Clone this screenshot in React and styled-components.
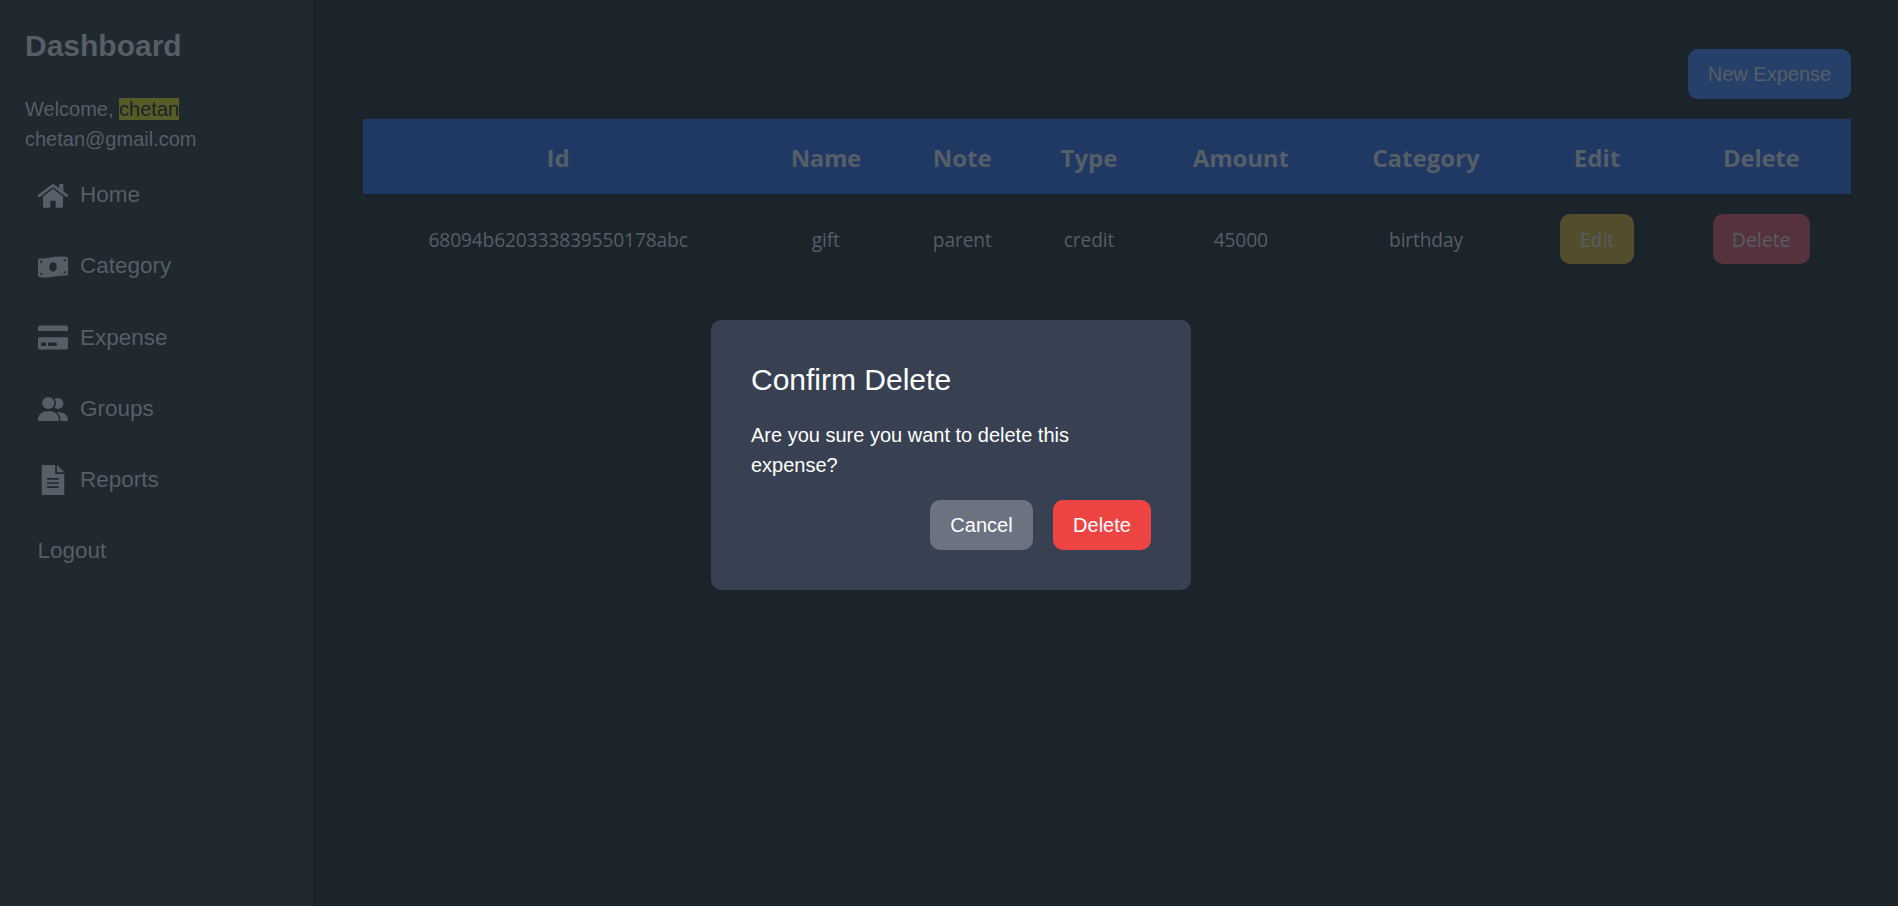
import React from "react";
import styled, { createGlobalStyle } from "styled-components";

const GlobalStyle = createGlobalStyle`
  *, *::before, *::after { box-sizing: border-box; }
  body {
    margin: 0;
    overflow: hidden;
    background: #1b232b;
    color: #565e67;
    font: 20px/30px "Liberation Sans", Arial, sans-serif;
  }
  h1, h2, p, ul { margin: 0; padding: 0; }
`;

const Page = styled.div`
  display: flex;
  height: 100vh;
`;

const Sidebar = styled.aside`
  flex: 0 0 313px;
  padding: 25px;
  background: #202830;
`;

const Brand = styled.h1`
  margin-bottom: 27px;
  font-size: 30px;
  line-height: 42px;
  font-weight: 700;
`;

const Mark = styled.mark`
  background: #555c26;
  color: #1b232b;
`;

const NavList = styled.ul`
  display: flex;
  flex-direction: column;
  gap: 40px;
  margin-top: 25px;
  padding-left: 12.5px;
  list-style: none;
`;

const NavItem = styled.li`
  display: flex;
  align-items: center;
  gap: 12.5px;
  height: 31.25px;
  font-size: 22.5px;
  line-height: 31.25px;
`;

const Icon = styled.svg`
  flex: none;
  width: 30px;
  height: 30px;
  fill: currentColor;
`;

const Main = styled.main`
  flex: 1;
  padding: 49px 47px 0 50px;
`;

const Toolbar = styled.div`
  display: flex;
  justify-content: flex-end;
  margin-bottom: 20px;
`;

const Button = styled.button`
  display: inline-block;
  vertical-align: middle;
  width: ${(p) => p.$width}px;
  height: 50px;
  padding: 0;
  border: 0;
  border-radius: 10px;
  background: ${(p) => p.$bg};
  color: ${(p) => p.$color || "inherit"};
  font: inherit;
  text-align: center;
  white-space: nowrap;
`;

const Table = styled.table`
  width: 1488px;
  table-layout: fixed;
  border-collapse: collapse;
  font-family: "Open Sans", "Noto Sans", sans-serif;
  text-align: center;
`;

const Th = styled.th`
  width: ${(p) => p.$width}px;
  height: 75px;
  padding: 3px 0 0;
  background: #203864;
  font-size: 24px;
  font-weight: 700;
  letter-spacing: ${(p) => p.$track || 0}px;
`;

const Td = styled.td`
  height: 90px;
  padding: 2px 0 0;
  font-size: 19.2px;
  letter-spacing: -0.15px;
`;

const ActionCell = styled.td`
  height: 90px;
  padding: 0;
  font-size: 19.5px;

  ${Button} { padding-top: 2px; }
`;

const Overlay = styled.div`
  position: fixed;
  inset: 0;
  display: flex;
  align-items: center;
  justify-content: center;
  padding: 4px 0 0 4px;
`;

const Dialog = styled.section`
  width: 480px;
  padding: 40px;
  border-radius: 10px;
  background: #374151;
  color: #fff;
`;

const DialogTitle = styled.h2`
  margin-bottom: 20px;
  font-size: 30px;
  line-height: 40px;
  font-weight: 400;
`;

const DialogActions = styled.div`
  display: flex;
  justify-content: flex-end;
  gap: 20px;
  margin-top: 20px;
`;

const HomeIcon = () => (
  <Icon viewBox="0 0 30 30">
    <path d="M1.300 15.600 15 5.300l13.700 10.300" fill="none" stroke="currentColor" strokeWidth="2.800" strokeLinecap="round" strokeLinejoin="round" />
    <path d="M21.300 4h4v9.200l-4-3.200z" />
    <path d="M15 8.800 25 16.600v9.900q0 1.200-1.200 1.200h-6.100v-7h-5.400v7H6.200Q5 27.700 5 26.500v-9.900z" />
  </Icon>
);

const MoneyIcon = () => (
  <Icon viewBox="0 0 30 30">
    <path
      fillRule="evenodd"
      d="M0 8.800q0-1.400 1.600-1.300C11 8 18 4 28.600 5.900q1.400.2 1.400 1.600v15.700q0 1.400-1.600 1.300C19 24 12 28 1.400 26.100q-1.400-.2-1.400-1.600zM15 11.300c-2.100 0-3.800 2-3.800 4.600s1.700 4.600 3.800 4.600 3.800-2 3.800-4.600-1.700-4.600-3.800-4.600zM2.200 9.700v2.500q2.300-.2 2.500-2.400zM27.800 8.200h-2.500q.2 2.100 2.500 2.300zM2.200 21.500v2.300h2.500q-.2-2.100-2.500-2.300zM27.800 19.900q-2.300.2-2.500 2.300l2.500.1z"
    />
  </Icon>
);

const CardIcon = () => (
  <Icon viewBox="0 0 30 30">
    <path d="M2 3.500h26q2 0 2 2V9H0V5.500q0-2 2-2z" />
    <path
      fillRule="evenodd"
      d="M0 15.200h30v10.200q0 2-2 2H2q-2 0-2-2zM3.700 20.500q-.7 0-.7.700v2q0 .7.700.7h3.700q.7 0 .7-.7v-2q0-.7-.7-.7zM10.700 20.500q-.7 0-.7.700v2q0 .7.700.7h7.400q.7 0 .7-.7v-2q0-.7-.7-.7z"
    />
  </Icon>
);

const PeopleIcon = () => (
  <Icon viewBox="0 0 30 30">
    <circle cx="10.300" cy="10" r="6.100" />
    <path d="M16.500 5.900c1-.7 2.200-1 3.400-1a5.500 5.500 0 0 1 0 11c-1.200 0-2.400-.4-3.300-1.100 1.900-2.700 1.900-6.200-.1-8.900z" />
    <path d="M0 27c0-5.200 3.600-8.800 8.600-8.800h3.800c5 0 8.600 3.600 8.600 8.800 0 .7-.4 1-1 1H1c-.6 0-1-.3-1-1z" />
    <path d="M18.700 19.200h2.800c4.900 0 8.500 3.400 8.500 7.800 0 .7-.4 1-1 1h-6.600c.5-3.600-.9-6.800-3.700-8.800z" />
  </Icon>
);

const DocumentIcon = () => (
  <Icon viewBox="0 0 30 30">
    <path d="M19 0 26.300 7.300H19z" />
    <path
      fillRule="evenodd"
      d="M4.900 0h12.300v8.900h9.100v19.900q0 1.200-1.200 1.200H4.900q-1.200 0-1.200-1.200V1.200Q3.700 0 4.900 0zM9.500 13.100q-.6 0-.6.800t.6.800h11q.6 0 .6-.8t-.6-.8zM9.500 17.200q-.6 0-.6.800t.6.800h11q.6 0 .6-.8t-.6-.8zM9.500 21.300q-.6 0-.6.800t.6.800h11q.6 0 .6-.8t-.6-.8z"
    />
  </Icon>
);

const links = [
  { label: "Home", Glyph: HomeIcon },
  { label: "Category", Glyph: MoneyIcon },
  { label: "Expense", Glyph: CardIcon },
  { label: "Groups", Glyph: PeopleIcon },
  { label: "Reports", Glyph: DocumentIcon },
  { label: "Logout" },
];

const columns = [
  { label: "Id", width: 390.2 },
  { label: "Name", width: 145.3, track: -0.4 },
  { label: "Note", width: 127.5 },
  { label: "Type", width: 126 },
  { label: "Amount", width: 177.5, track: -0.2 },
  { label: "Category", width: 193 },
  { label: "Edit", width: 149 },
  { label: "Delete", width: 179.5, track: -0.3 },
];

const expense = ["68094b620333839550178abc", "gift", "parent", "credit", "45000", "birthday"];

export default function App() {
  return (
    <>
      <GlobalStyle />
      <Page>
        <Sidebar>
          <Brand>Dashboard</Brand>
          <p>Welcome, <Mark>chetan</Mark></p>
          <p>chetan@gmail.com</p>
          <NavList>
            {links.map(({ label, Glyph }) => (
              <NavItem key={label}>
                {Glyph && <Glyph />}
                <span>{label}</span>
              </NavItem>
            ))}
          </NavList>
        </Sidebar>
        <Main>
          <Toolbar>
            <Button $width={163} $bg="#274069">New Expense</Button>
          </Toolbar>
          <Table>
            <thead>
              <tr>
                {columns.map(({ label, width, track }) => (
                  <Th key={label} $width={width} $track={track}>{label}</Th>
                ))}
              </tr>
            </thead>
            <tbody>
              <tr>
                {expense.map((value) => <Td key={value}>{value}</Td>)}
                <ActionCell><Button $width={74} $bg="#534d2b">Edit</Button></ActionCell>
                <ActionCell><Button $width={97} $bg="#55323c">Delete</Button></ActionCell>
              </tr>
            </tbody>
          </Table>
        </Main>
      </Page>
      <Overlay>
        <Dialog role="dialog" aria-modal="true">
          <DialogTitle>Confirm Delete</DialogTitle>
          <p>Are you sure you want to delete this expense?</p>
          <DialogActions>
            <Button $width={103} $bg="#6b7280" $color="#fff">Cancel</Button>
            <Button $width={98} $bg="#ef4444" $color="#fff">Delete</Button>
          </DialogActions>
        </Dialog>
      </Overlay>
    </>
  );
}
